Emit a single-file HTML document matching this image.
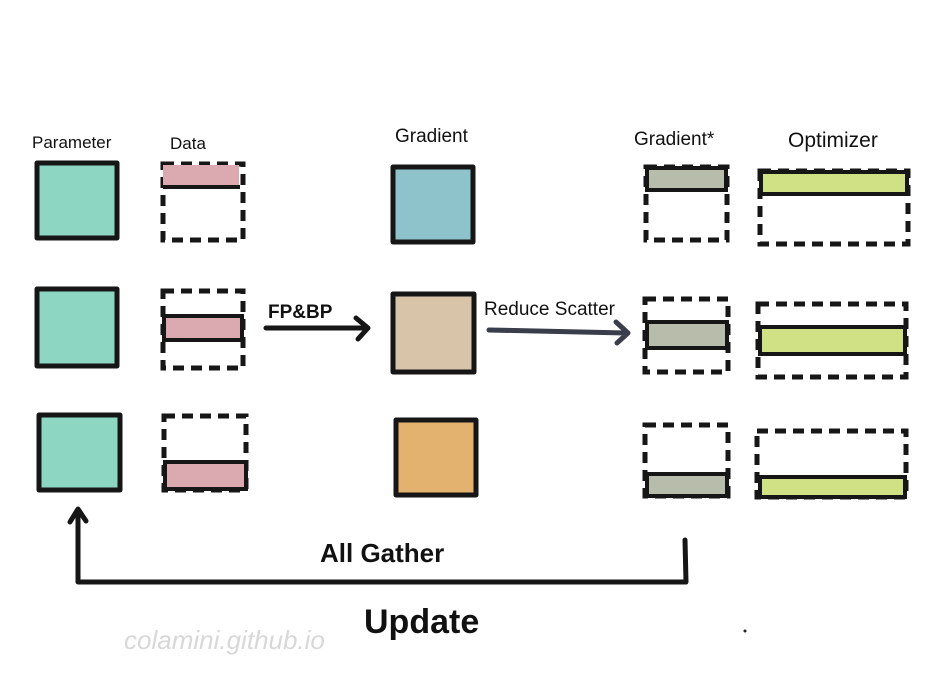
<!DOCTYPE html>
<html><head><meta charset="utf-8"><style>
html,body{margin:0;padding:0;background:#fff;width:939px;height:697px;overflow:hidden}
svg{position:absolute;left:0;top:0}
text{font-family:"Liberation Sans",sans-serif;fill:#111}
</style></head><body>
<svg width="939" height="697" viewBox="0 0 939 697">
<g stroke="#161616" stroke-width="5" stroke-linejoin="round">
<!-- Parameter -->
<rect x="37" y="163" width="80" height="75" fill="#8dd6c2"/>
<rect x="37" y="289" width="80" height="77" fill="#8dd6c2"/>
<rect x="39" y="415" width="81" height="75" fill="#8dd6c2"/>
<!-- Gradient -->
<rect x="393" y="167" width="80" height="75" fill="#8fc3cc"/>
<rect x="393" y="294" width="81" height="78" fill="#d8c4a9"/>
<rect x="396" y="420" width="80" height="75" fill="#e4b26f"/>
</g>
<g stroke="#161616" stroke-width="5" fill="none" stroke-dasharray="11 7">
<rect x="163" y="164" width="80" height="76"/>
<rect x="163" y="291" width="80" height="77"/>
<rect x="164" y="416" width="82" height="74"/>
<rect x="646" y="167" width="81" height="73"/>
<rect x="645" y="299" width="83" height="73"/>
<rect x="645" y="425" width="83" height="71"/>
<rect x="760" y="171" width="148" height="73"/>
<rect x="758" y="304" width="148" height="73"/>
<rect x="757" y="431" width="149" height="66"/>
</g>
<g stroke="#161616" stroke-width="4">
<rect x="163" y="165" width="76" height="21" fill="#dba9b0" stroke="none"/>
<line x1="163" y1="187" x2="240" y2="187"/>
<rect x="164" y="316" width="78" height="24" fill="#dba9b0"/>
<rect x="165" y="462" width="81" height="27" fill="#dba9b0"/>
<rect x="647" y="168" width="79" height="22" fill="#b8bcaa"/>
<rect x="647" y="322" width="80" height="26" fill="#b8bcaa"/>
<rect x="647" y="474" width="80" height="22" fill="#b8bcaa"/>
<rect x="761" y="172" width="146" height="22" fill="#d0e085"/>
<rect x="760" y="327" width="145" height="27" fill="#d0e085"/>
<rect x="760" y="477" width="145" height="20" fill="#d0e085"/>
</g>
<!-- arrows -->
<g fill="none" stroke-linecap="round" stroke-linejoin="round">
<path d="M266 328 L366 328 M356 318 L368 328 L358 339" stroke="#161616" stroke-width="5"/>
<path d="M489 330 L626 333 M616 322 L628 333 L617 343" stroke="#3a3d4a" stroke-width="5"/>
<path d="M685 540 L686 582 L78 582 L78 510 M70 522 L78 509 L86 521" stroke="#161616" stroke-width="5"/>
</g>
<text x="32" y="148" font-size="17">Parameter</text>
<text x="170" y="149" font-size="17">Data</text>
<text x="395" y="142" font-size="19">Gradient</text>
<text x="634" y="145" font-size="19">Gradient*</text>
<text x="788" y="147" font-size="21">Optimizer</text>
<text x="268" y="318" font-size="19" font-weight="bold">FP&amp;BP</text>
<text x="484" y="315" font-size="19">Reduce Scatter</text>
<text x="320" y="562" font-size="26" font-weight="bold">All Gather</text>
<text x="364" y="633" font-size="34" font-weight="bold">Update</text>
<text x="124" y="649" font-size="26" font-style="italic" style="fill:#d8d8d8">colamini.github.io</text>
<circle cx="745" cy="631" r="1.5" fill="#222"/>
</svg>
</body></html>
